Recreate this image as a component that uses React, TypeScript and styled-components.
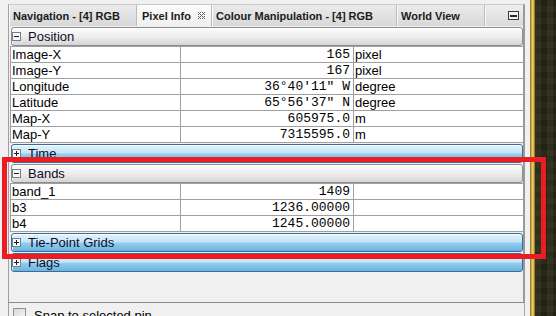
import React from "react";
import styled, { createGlobalStyle } from "styled-components";

const GlobalStyle = createGlobalStyle`
  html, body { margin: 0; padding: 0; }
  body { background: #f0f0f0; font-family: "Liberation Sans", Arial, sans-serif; }
`;

const Frame = styled.div`
  position: relative;
  width: 556px;
  height: 316px;
  overflow: hidden;
  display: flex;
`;

const Window = styled.div`
  width: 530px;
  height: 316px;
  flex: none;
  box-sizing: border-box;
  padding: 4px 5px 0 8px;
  background: #f0f0f0;
  display: flex;
  flex-direction: column;
`;

const GoldEdge = styled.div`
  width: 5px;
  flex: none;
  background: linear-gradient(to right, #8a6a1c, #d9b54a 35%, #f2d877 60%, #7a5e18);
`;

const Desktop = styled.div`
  flex: 1;
  background-color: #2a2a1a;
  background-image:
    linear-gradient(90deg, rgba(70, 70, 45, 0.35) 50%, transparent 50%),
    linear-gradient(rgba(20, 20, 10, 0.35) 50%, transparent 50%);
  background-size: 12px 12px, 12px 12px;
`;

const TabBar = styled.div`
  height: 22px;
  flex: none;
  box-sizing: border-box;
  display: flex;
  border-top: 1px solid #c9c9c9;
  border-left: 1px solid #a0a0a0;
  border-right: 2px solid #9a9a9a;
  background: linear-gradient(#eeeeee, #dadada);
`;

const Tab = styled.div<{ $w: number; $active?: boolean }>`
  width: ${(p) => p.$w}px;
  flex: none;
  box-sizing: border-box;
  display: flex;
  align-items: center;
  gap: 7px;
  padding-left: ${(p) => (p.$active ? 5 : 4)}px;
  font: bold 11px "Liberation Sans", Arial, sans-serif;
  color: #1b1b1b;
  white-space: nowrap;
  border-right: 1px solid #b9b9b9;
  box-shadow: inset 1px 0 #fbfbfb;
  background: ${(p) =>
    p.$active
      ? "linear-gradient(#fbfbfb, #efefef)"
      : "linear-gradient(#ebebeb, #d8d8d8)"};
`;

const TabFiller = styled.div`
  flex: 1;
  display: flex;
  align-items: center;
  justify-content: flex-end;
  padding-right: 4px;
  box-shadow: inset 1px 0 #fbfbfb;
`;

const Panel = styled.div`
  height: 276px;
  flex: none;
  box-sizing: border-box;
  border-left: 1px solid #a0a0a0;
  border-right: 2px solid #9a9a9a;
  padding: 1px 0 0 1px;
  display: flex;
  flex-direction: column;
  gap: 1px;
`;

const Section = styled.div`
  display: flex;
  flex-direction: column;
`;

const SectionHeader = styled.div<{ $open: boolean }>`
  height: 19px;
  box-sizing: border-box;
  margin-left: 1px;
  display: flex;
  align-items: center;
  gap: 7px;
  border: 1px solid ${(p) => (p.$open ? "#8d8d8d" : "#3c6d99")};
  border-radius: 3px;
  background: ${(p) =>
    p.$open
      ? "linear-gradient(#fbfbfb, #eeeeee 50%, #d5d5d5)"
      : "linear-gradient(#e4f3fc, #c6e5f7 45%, #92cdef 55%, #6cb3e1)"};
  box-shadow: inset 1px 1px rgba(255, 255, 255, 0.85);
  font: 13px "Liberation Sans", Arial, sans-serif;
  color: #0e0e26;
  white-space: nowrap;
`;

const Table = styled.div`
  background: #ffffff;
  border-top: 1px solid #a0a0a0;
  border-left: 1px solid #a0a0a0;
`;

const Row = styled.div`
  display: grid;
  grid-template-columns: 170px 173px 1fr;
  height: 16px;
  box-sizing: border-box;
  border-bottom: 1px solid #a0a0a0;
`;

const Cell = styled.div<{ $kind: "name" | "value" | "unit" }>`
  box-sizing: border-box;
  height: 15px;
  line-height: 15px;
  white-space: nowrap;
  overflow: hidden;
  color: #000;
  border-right: ${(p) => (p.$kind === "unit" ? "none" : "1px solid #a0a0a0")};
  padding: ${(p) => (p.$kind === "value" ? "0 3px 0 0" : "0 0 0 1px")};
  text-align: ${(p) => (p.$kind === "value" ? "right" : "left")};
  font: ${(p) =>
    p.$kind === "value"
      ? '13px/15px "Liberation Mono", "Courier New", monospace'
      : '13px/15px "Liberation Sans", Arial, sans-serif'};
`;

const BottomBar = styled.div`
  height: 40px;
  flex: none;
  box-sizing: border-box;
  border-top: 1px solid #8a8a8a;
  border-left: 1px solid #a0a0a0;
  border-right: 1px solid #a8a8a8;
  padding: 5px 0 0 4px;
  display: flex;
  align-items: flex-start;
  gap: 8px;
  font: 13px/15px "Liberation Sans", Arial, sans-serif;
  color: #000;
`;

const CheckBox = styled.div`
  width: 13px;
  height: 13px;
  flex: none;
  box-sizing: border-box;
  border: 1px solid #8e8f8f;
  background: linear-gradient(135deg, #d8d8d8, #f8f8f8);
`;

const Highlight = styled.div`
  position: absolute;
  left: 2px;
  top: 157px;
  width: 544px;
  height: 102px;
  box-sizing: border-box;
  border: 5px solid #ec1c24;
  pointer-events: none;
`;

const ExpandIcon = ({ open }: { open: boolean }) => (
  <svg width="9" height="9" viewBox="0 0 9 9" style={{ flex: "none", marginLeft: 0 }}>
    <rect x="0.5" y="0.5" width="8" height="8" fill="#f6f8fa" stroke="#6f8193" />
    <line x1="2" y1="4.5" x2="7" y2="4.5" stroke="#1e1e1e" />
    {!open && <line x1="4.5" y1="2" x2="4.5" y2="7" stroke="#1e1e1e" />}
  </svg>
);

const CloseGlyph = () => (
  <svg width="7" height="7" viewBox="0 0 7 7" style={{ flex: "none" }}>
    {[
      [0, 0], [2, 0], [4, 0], [6, 0],
      [1, 1], [5, 1],
      [0, 2], [2, 2], [4, 2], [6, 2],
      [3, 3],
      [0, 4], [2, 4], [4, 4], [6, 4],
      [1, 5], [5, 5],
      [0, 6], [2, 6], [4, 6], [6, 6],
    ].map(([x, y], i) => (
      <rect key={i} x={x} y={y} width="1" height="1" fill="#6a6a6a" />
    ))}
  </svg>
);

const MinimizeGlyph = () => (
  <svg width="11" height="9" viewBox="0 0 11 9">
    <rect x="0.5" y="0.5" width="10" height="8" fill="#f2f2f2" stroke="#3a3a3a" />
    <rect x="2" y="4" width="7" height="2" fill="#2a2a2a" />
  </svg>
);

type Item = { name: string; value: string; unit: string };

const position: Item[] = [
  { name: "Image-X", value: "165", unit: "pixel" },
  { name: "Image-Y", value: "167", unit: "pixel" },
  { name: "Longitude", value: "36°40'11\" W", unit: "degree" },
  { name: "Latitude", value: "65°56'37\" N", unit: "degree" },
  { name: "Map-X", value: "605975.0", unit: "m" },
  { name: "Map-Y", value: "7315595.0", unit: "m" },
];

const bands: Item[] = [
  { name: "band_1", value: "1409", unit: "" },
  { name: "b3", value: "1236.00000", unit: "" },
  { name: "b4", value: "1245.00000", unit: "" },
];

const sections: { title: string; rows?: Item[] }[] = [
  { title: "Position", rows: position },
  { title: "Time" },
  { title: "Bands", rows: bands },
  { title: "Tie-Point Grids" },
  { title: "Flags" },
];

export default function App() {
  return (
    <>
      <GlobalStyle />
      <Frame>
        <Window>
          <TabBar>
            <Tab $w={128}>Navigation - [4] RGB</Tab>
            <Tab $w={75} $active>
              Pixel Info <CloseGlyph />
            </Tab>
            <Tab $w={185}>Colour Manipulation - [4] RGB</Tab>
            <Tab $w={88}>World View</Tab>
            <TabFiller>
              <MinimizeGlyph />
            </TabFiller>
          </TabBar>
          <Panel>
            {sections.map((s) => (
              <Section key={s.title}>
                <SectionHeader $open={!!s.rows}>
                  <ExpandIcon open={!!s.rows} />
                  {s.title}
                </SectionHeader>
                {s.rows && (
                  <Table>
                    {s.rows.map((r) => (
                      <Row key={r.name}>
                        <Cell $kind="name">{r.name}</Cell>
                        <Cell $kind="value">{r.value}</Cell>
                        <Cell $kind="unit">{r.unit}</Cell>
                      </Row>
                    ))}
                  </Table>
                )}
              </Section>
            ))}
          </Panel>
          <BottomBar>
            <CheckBox />
            Snap to selected pin
          </BottomBar>
        </Window>
        <GoldEdge />
        <Desktop />
        <Highlight />
      </Frame>
    </>
  );
}
